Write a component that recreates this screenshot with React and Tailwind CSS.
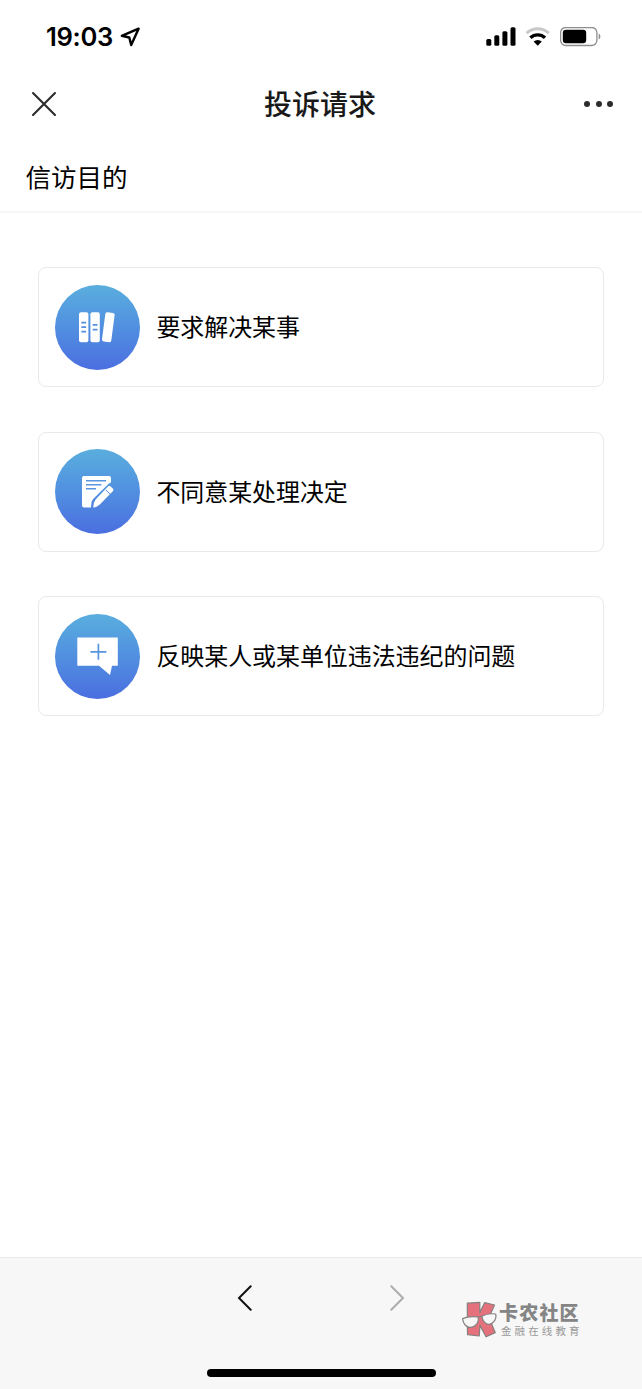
/**
 * Página "投诉请求": lista de motivos da petição,
 * com barra de status, cabeçalho e barra de navegação inferior.
 */

function LocationIcon() {
    return (
        <svg width="22" height="22" viewBox="119 26 22 22" fill="none" aria-hidden="true">
            <path
                d="M138.6 28.7 L121.8 35.9 L129.3 37.5 L131.2 45 Z"
                stroke="#000"
                strokeWidth="2.4"
                strokeLinejoin="round"
            />
        </svg>
    );
}

function SignalIcon() {
    return (
        <svg width="30" height="20" viewBox="486 27 30 20" aria-hidden="true">
            <rect x="486.3" y="39" width="5" height="6.7" rx="1.5" />
            <rect x="494.3" y="35.3" width="5" height="10.4" rx="1.5" />
            <rect x="502.4" y="31.2" width="5" height="14.5" rx="1.5" />
            <rect x="510.5" y="27.2" width="5" height="18.5" rx="1.5" />
        </svg>
    );
}

function WifiIcon() {
    return (
        <svg width="26" height="20" viewBox="525 27 26 20" fill="none" aria-hidden="true">
            <path d="M526.6 33.2 A16.2 16.2 0 0 1 548.8 33.2" stroke="#c8c8c8" strokeWidth="3" />
            <path d="M530.4 37.8 A10.6 10.6 0 0 1 545 37.8" stroke="#000" strokeWidth="3.4" />
            <path d="M533.6 41.6 A6 6 0 0 1 541.8 41.6 L537.7 45.8 Z" fill="#000" />
        </svg>
    );
}

function BatteryIcon() {
    return (
        <svg width="42" height="20" viewBox="560 27 42 20" fill="none" aria-hidden="true">
            <rect x="560.6" y="27.5" width="36.3" height="18" rx="5.2" stroke="#8e8e8e" strokeWidth="1.3" />
            <rect x="562.8" y="29.8" width="23.4" height="13.4" rx="3.2" fill="#000" />
            <path d="M598.7 33.6 C600.9 34.4 600.9 38.8 598.7 39.6 Z" fill="#8e8e8e" />
        </svg>
    );
}

function BooksIcon() {
    return (
        <svg width="38" height="32" viewBox="79 311 38 32" aria-hidden="true">
            <rect x="79" y="312.3" width="9.4" height="30" rx="2" fill="#fff" />
            <rect x="90.4" y="312.3" width="9.4" height="30" rx="2" fill="#fff" />
            <rect x="103.6" y="312.4" width="9.4" height="29.6" rx="2" fill="#fff" transform="rotate(7.5 108.3 327.2)" />
            <path d="M81.3 322.6h4.8M81.3 327.1h4.8M81.3 331.6h4.8M92.7 324.9h4.8M92.7 329.6h4.8" stroke="#5591de" strokeWidth="1.8" />
        </svg>
    );
}

function NoteIcon() {
    return (
        <svg width="34" height="34" viewBox="81 475 34 34" aria-hidden="true">
            <path
                d="M84 476 H109 Q111 476 111 478 V482.6 Q109.6 482.9 108.4 484 L93.4 498.8 Q91.6 500.7 91.4 503.2 L91 507.4 H84 Q82 507.4 82 505.4 V478 Q82 476 84 476 Z"
                fill="#fff"
            />
            <path d="M86 480.8h20M86 484.8h15.4M86 488.7h10" stroke="#5896df" strokeWidth="1.5" />
            <path
                d="M108.2 486.2 Q109.3 485.2 110.4 486.2 L113 488.8 Q114 489.9 113 491 L99.8 504.5 Q97.2 507.2 93.2 507.4 Q93.4 502.2 95.6 499.4 Z"
                fill="#fff"
            />
            <path d="M105.8 489.8 L110 494" stroke="#5591de" strokeWidth="1" />
        </svg>
    );
}

function MessagePlusIcon() {
    return (
        <svg width="42" height="40" viewBox="77 636.5 42 40" aria-hidden="true">
            <path d="M77.3 638 H117.8 V666.2 H112 L110 675.5 L99 666.2 H77.3 Z" fill="#fff" />
            <path d="M90.4 652.3h16M98.4 644.3v16" stroke="#5896df" strokeWidth="1.7" />
        </svg>
    );
}

const options = [
    { label: "要求解决某事", icon: BooksIcon },
    { label: "不同意某处理决定", icon: NoteIcon },
    { label: "反映某人或某单位违法违纪的问题", icon: MessagePlusIcon },
];

function StatusBar() {
    return (
        <div className="flex h-[74px] items-center justify-between pr-10 pl-[46px]">
            <div className="flex items-center gap-[6px]">
                <span className="w-[67px] text-[25.6px] leading-none font-semibold tracking-[-0.3px] whitespace-nowrap">
                    19:03
                </span>
                <LocationIcon />
            </div>
            <div className="flex items-center gap-[9px]">
                <SignalIcon />
                <WifiIcon />
                <BatteryIcon />
            </div>
        </div>
    );
}

function Header() {
    return (
        <header className="grid h-[59px] grid-cols-[1fr_auto_1fr] items-center pr-[29px] pl-[31px] text-[#191919]">
            <button type="button" aria-label="关闭" className="justify-self-start">
                <svg width="26" height="26" viewBox="0 0 26 26" fill="none">
                    <path d="M2 2 L24 24 M24 2 L2 24" stroke="#2b2b2b" strokeWidth="2.1" strokeLinecap="round" />
                </svg>
            </button>
            <h1 className="mr-1 pt-[3px] text-[28px] leading-10 font-medium">投诉请求</h1>
            <button type="button" aria-label="更多" className="flex gap-[5.4px] justify-self-end">
                <span className="size-[6px] rounded-full bg-[#2b2b2b]" />
                <span className="size-[6px] rounded-full bg-[#2b2b2b]" />
                <span className="size-[6px] rounded-full bg-[#2b2b2b]" />
            </button>
        </header>
    );
}

function OptionCard({ label, icon: Icon }) {
    return (
        <button
            type="button"
            className="flex h-[120px] w-full items-center gap-[16.4px] rounded-lg border border-[#e9e9e9] pl-4 text-left"
        >
            <span className="flex size-[85px] items-center justify-center rounded-full bg-linear-to-b from-[#5aaede] to-[#4b6ee0]">
                <Icon />
            </span>
            <span className="pt-[2px] text-[23.93px] leading-9">{label}</span>
        </button>
    );
}

function Watermark() {
    return (
        <div className="absolute top-[42px] left-[461px] flex gap-[2px]">
            <svg width="36" height="40" viewBox="461 1300 36 40" aria-hidden="true">
                <g stroke="#85807f" strokeWidth="1.2" strokeLinejoin="round">
                    <path
                        d="M467.3 1303.2 L479.8 1302.4 V1312.6 L484.6 1302.7 L494.5 1305 L489 1317.5 L495.2 1332.6 L486 1336.8 L480 1325.4 L479.2 1336 L467.5 1334.6 Z"
                        fill="#e4717c"
                    />
                    <path d="M462.6 1318.6 Q469.5 1315.6 478 1317 Q479.2 1320 477.2 1323.4 Q474.2 1327.6 469.4 1327.3 Q463.6 1326.2 462.6 1318.6 Z" fill="#f7f7f7" />
                    <path d="M481.8 1316.2 Q488 1313 495.6 1314 Q496.6 1317 494.8 1320.4 Q492.2 1324.4 488 1324.3 Q483 1323.2 481.8 1316.2 Z" fill="#f7f7f7" />
                    <path d="M478 1317.6 Q479.8 1316 481.8 1316.6" fill="none" />
                </g>
            </svg>
            <div className="flex flex-col whitespace-nowrap">
                <span className="mt-[4px] text-[19px] leading-[19px] font-black tracking-[1.2px] text-[#858585]">卡农社区</span>
                <span className="mt-[3px] ml-[2px] text-[10.5px] leading-[11px] tracking-[3.1px] text-[#999999]">金融在线教育</span>
            </div>
        </div>
    );
}

function BottomBar() {
    return (
        <footer className="relative flex h-[132px] flex-col items-center justify-between border-t border-[#e9e9e9] bg-[#f7f7f7] pt-[27px] pb-3">
            <div className="flex gap-[136px]">
                <button type="button" aria-label="后退">
                    <svg width="16" height="26" viewBox="0 0 16 26" fill="none">
                        <path d="M13.7 1.2 L2 13 L13.7 24.8" stroke="#111" strokeWidth="2" strokeLinecap="round" />
                    </svg>
                </button>
                <button type="button" aria-label="前进">
                    <svg width="16" height="26" viewBox="0 0 16 26" fill="none">
                        <path d="M2.3 1.2 L14 13 L2.3 24.8" stroke="#adadad" strokeWidth="2" strokeLinecap="round" />
                    </svg>
                </button>
            </div>
            <div className="h-2 w-[229px] rounded-full bg-black" />
            <Watermark />
        </footer>
    );
}

export default function App() {
    return (
        <div className="flex h-[1389px] w-[642px] flex-col bg-white font-['Inter','Noto_Sans_CJK_SC',sans-serif] text-black">
            <StatusBar />
            <Header />
            <h2 className="h-[80px] border-b-2 border-[#f6f6f6] pt-[27px] pl-[25.5px] text-[25.5px] leading-9">
                信访目的
            </h2>
            <main className="flex flex-1 flex-col gap-[44.6px] px-[38px] pt-[54px]">
                {options.map((option) => (
                    <OptionCard key={option.label} {...option} />
                ))}
            </main>
            <BottomBar />
        </div>
    );
}
